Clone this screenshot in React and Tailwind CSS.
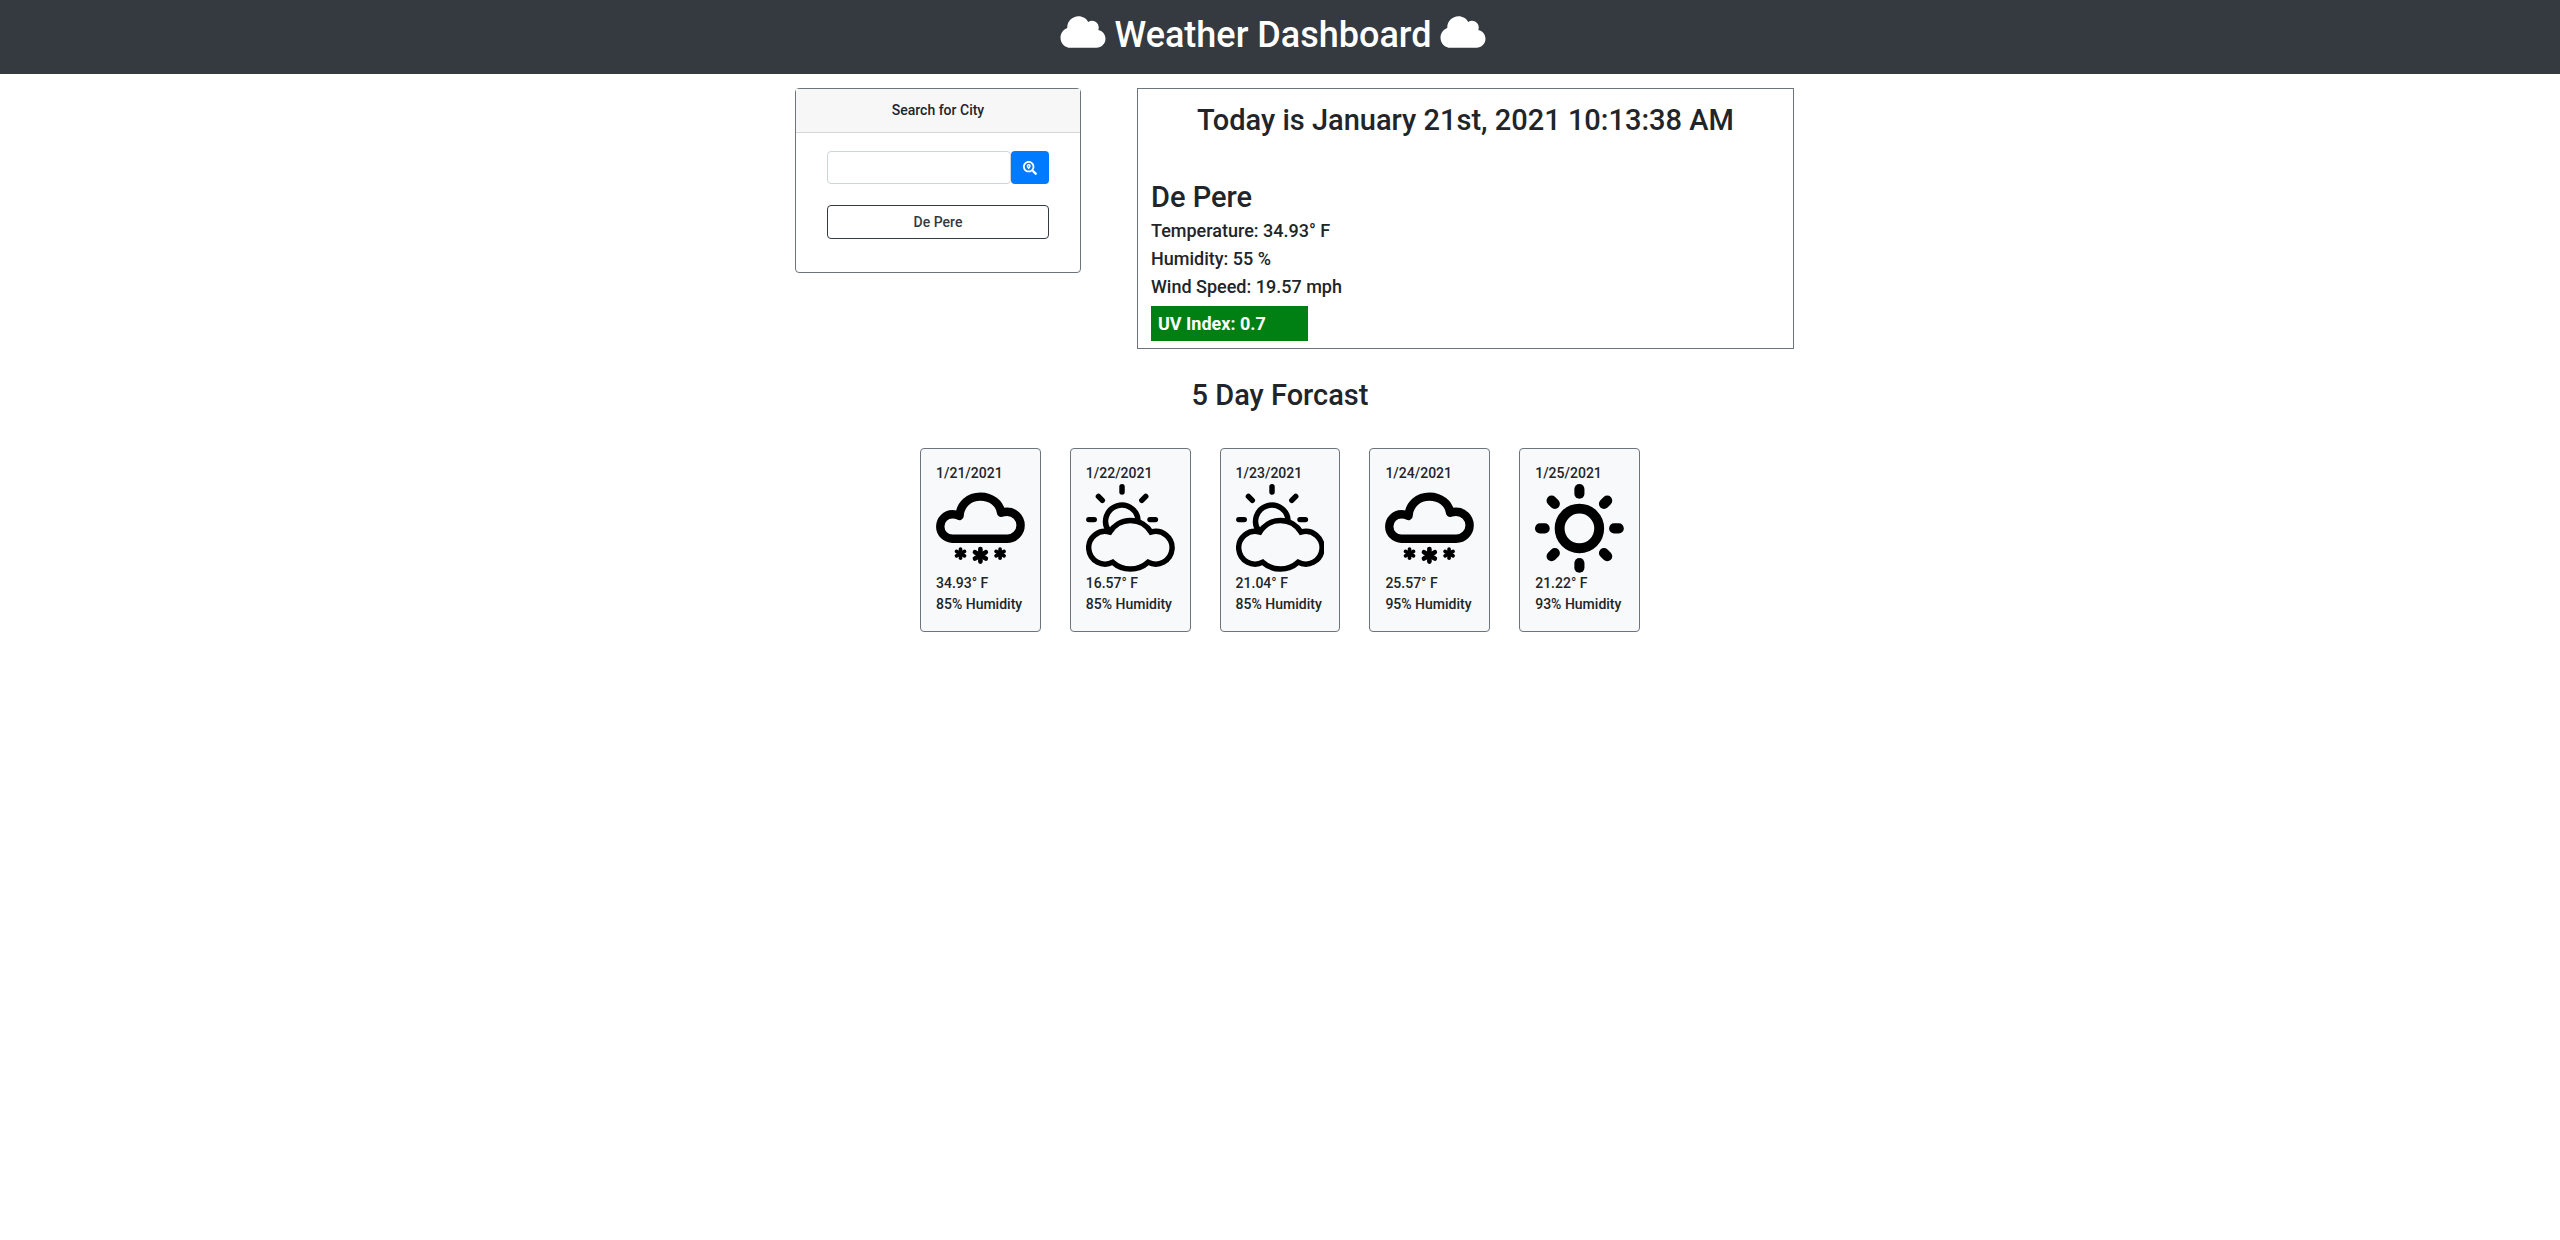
import React from "react";
import { FaCloud, FaSearchLocation } from "react-icons/fa";

function SnowIcon() {
  const flakes = [
    { x: 24.3, y: 69, r: 4.6, w: 3.6 },
    { x: 44, y: 70.7, r: 6.2, w: 4.6 },
    { x: 63.5, y: 69, r: 4.6, w: 3.6 },
  ];
  return (
    <svg viewBox="0 0 88 88" className="block w-full" fill="none" stroke="#000" strokeLinecap="round" strokeLinejoin="round" role="img" aria-label="Snow">
      <path strokeWidth="8.3" d="M16.3 54.2a12.1 12.1 0 0 1 0-24.2q3.5 0 7 1.7C24 20 33 12.5 44 12.5S63.5 19.5 64.5 28.5q3-1 6-1a13.35 13.35 0 0 1 0 26.7z" />
      {flakes.map((f) =>
        [0, 60, 120].map((a) => (
          <path key={`${f.x}-${a}`} strokeWidth={f.w} d={`M${f.x} ${f.y - f.r}v${f.r * 2}`} transform={`rotate(${a} ${f.x} ${f.y})`} />
        ))
      )}
    </svg>
  );
}

function PartlyCloudyIcon() {
  return (
    <svg viewBox="0 0 88 88" className="block w-full" fill="none" stroke="#000" strokeWidth="5.4" role="img" aria-label="Partly cloudy">
      <path d="M23.6 47.7A16.2 16.2 0 1 0 26.5 77.5A25.9 25.9 0 0 0 61.5 77.5A16.2 16.2 0 1 0 64.4 47.7A23.8 23.8 0 0 0 23.6 47.7z" />
      <path d="M22.5 46.5A16.1 16.1 0 1 1 51.6 37.5" />
      <path strokeLinecap="round" d="M35.7 2.8V8M2.8 35.3H8.2M63.4 35.3H68.8M12.3 12.3l3.9 3.9M59.2 12.3l-3.9 3.9" />
    </svg>
  );
}

function SunIcon() {
  return (
    <svg viewBox="0 0 88 88" className="block w-full" fill="none" stroke="#000" role="img" aria-label="Sunny">
      <circle cx="44" cy="44" r="19.6" strokeWidth="9.8" />
      {[0, 45, 90, 135, 180, 225, 270, 315].map((a) => (
        <path key={a} strokeWidth="10" strokeLinecap="round" d="M44 5v4.6" transform={`rotate(${a} 44 44)`} />
      ))}
    </svg>
  );
}

const forecast = [
  { date: "1/21/2021", Icon: SnowIcon, temp: "34.93", humidity: 85 },
  { date: "1/22/2021", Icon: PartlyCloudyIcon, temp: "16.57", humidity: 85 },
  { date: "1/23/2021", Icon: PartlyCloudyIcon, temp: "21.04", humidity: 85 },
  { date: "1/24/2021", Icon: SnowIcon, temp: "25.57", humidity: 95 },
  { date: "1/25/2021", Icon: SunIcon, temp: "21.22", humidity: 93 },
];

export default function App() {
  return (
    <div className="font-['Roboto',sans-serif] text-sm leading-[21px] font-medium text-[#212529]">
      <header className="bg-[#343a40] pt-3.5 pb-[18px] pr-3.5">
        <h1 className="flex items-start justify-center gap-[9px] text-4xl leading-[42px] font-medium text-white">
          <FaCloud className="h-9 w-[46px]" aria-hidden="true" />
          Weather Dashboard
          <FaCloud className="h-9 w-[46px]" aria-hidden="true" />
        </h1>
      </header>

      <main>
        <div className="mx-auto mt-3.5 flex max-w-[1028px] items-start gap-14 pl-[29px]">
          <section className="w-[286px] shrink-0 rounded border border-[#6c757d]">
            <h2 className="border-b border-[#d6d6d6] bg-[#f7f7f7] py-[11px] text-center">
              <label htmlFor="city">Search for City</label>
            </h2>
            <div className="px-[31px] pt-[18px] pb-[33px]">
              <form className="flex" onSubmit={(e) => e.preventDefault()}>
                <input id="city" type="text" className="h-[33px] min-w-0 flex-1 rounded border border-[#ced4da] px-3" />
                <button type="submit" aria-label="Search" className="flex h-[33px] w-[38px] items-center justify-center rounded bg-[#007bff] text-white">
                  <FaSearchLocation className="size-3.5" />
                </button>
              </form>
              <button type="button" className="mt-[21px] h-[34px] w-full rounded border border-[#343a40] text-[#343a40]">
                De Pere
              </button>
            </div>
          </section>

          <section className="min-w-0 flex-1 border border-[#6c757d] px-[13px] pt-[13px] pb-[7px]">
            <h2 className="text-center text-[29px] leading-9 font-medium">
              Today is January 21st, 2021 10:13:38 AM
            </h2>
            <h3 className="mt-[41px] text-[29px] leading-9 font-medium">De Pere</h3>
            <div className="mt-0.5 text-lg leading-7">
              <p>Temperature: 34.93° F</p>
              <p>Humidity: 55 %</p>
              <p>Wind Speed: 19.57 mph</p>
            </div>
            <p className="mt-[5px] w-1/4 bg-[#008013] px-[7px] py-1 text-lg leading-[27px] font-bold text-white">UV Index: 0.7</p>
          </section>
        </div>

        <h2 className="mt-7 text-center text-[29px] leading-9 font-medium">5 Day Forcast</h2>
        <div className="mx-auto mt-[35px] grid max-w-[720px] grid-cols-5 gap-[29px]">
          {forecast.map(({ date, Icon, temp, humidity }) => (
            <article key={date} className="rounded border border-[#6c757d] bg-[#f8f9fa] px-[15px] pt-3.5 pb-4">
              <p>{date}</p>
              <Icon />
              <p>{temp}° F</p>
              <p>{humidity}% Humidity</p>
            </article>
          ))}
        </div>
      </main>
    </div>
  );
}
